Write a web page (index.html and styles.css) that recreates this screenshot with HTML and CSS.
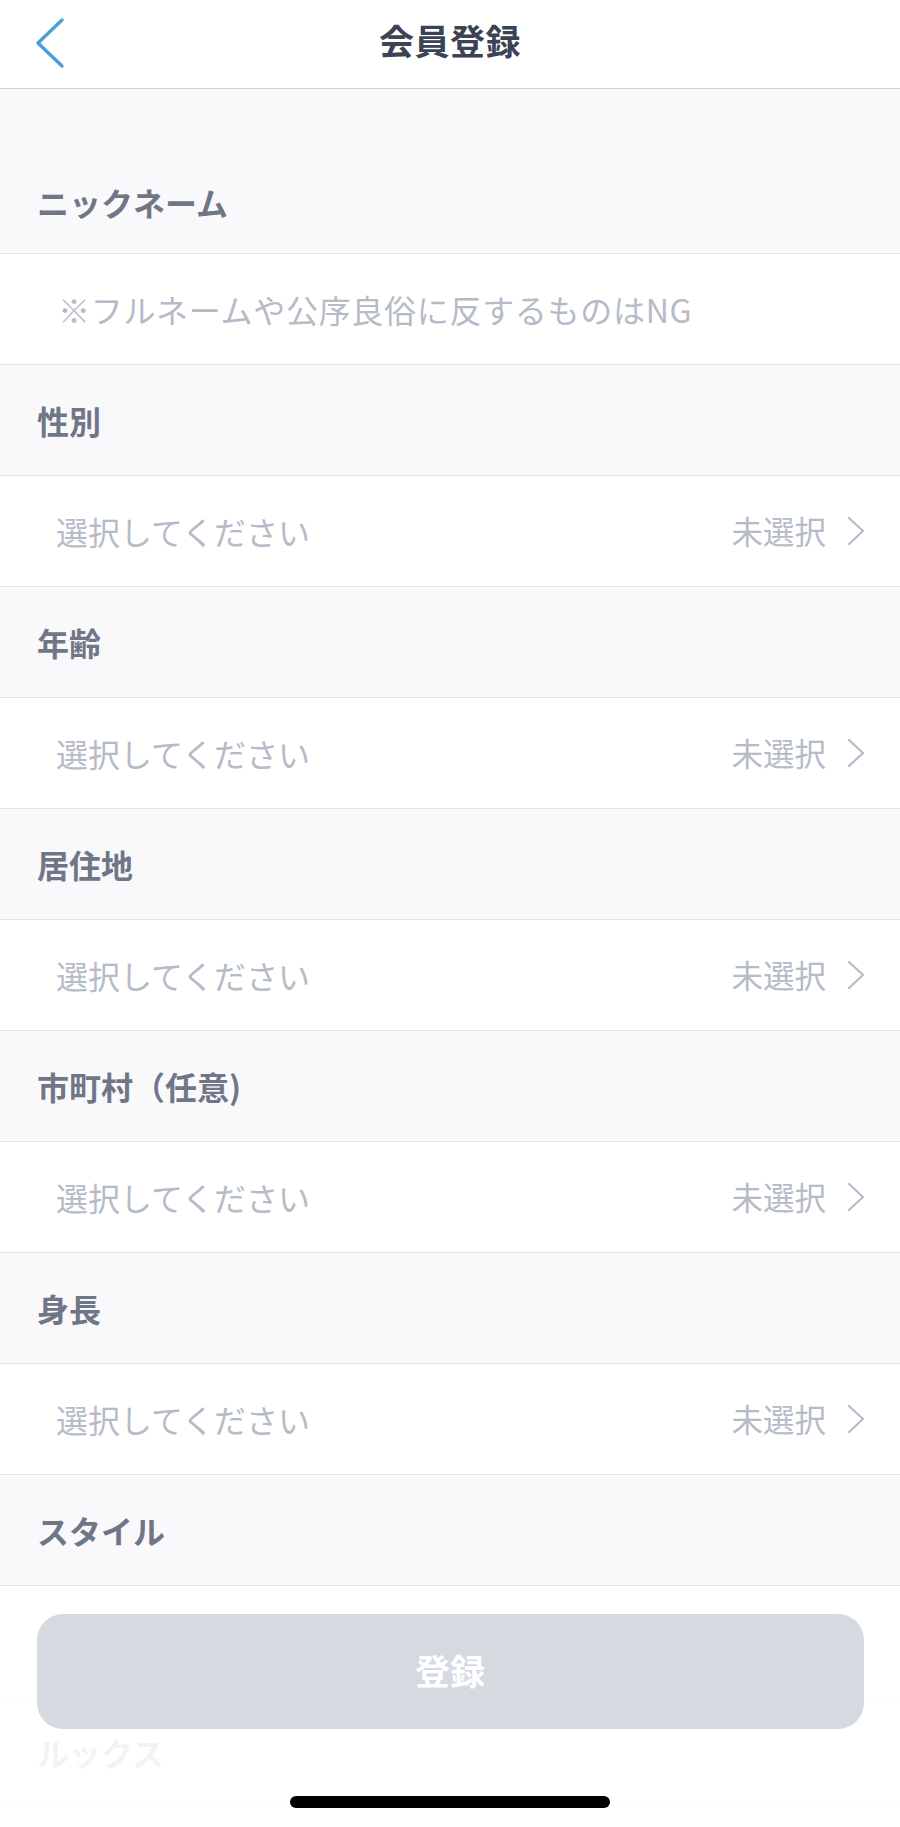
FILE: index.html
```html
<!DOCTYPE html>
<html lang="ja">
<head>
<meta charset="utf-8">
<title>会員登録</title>
<link rel="stylesheet" href="styles.css">
</head>
<body>
<div class="app">
  <header class="nav">
    <div class="nav-left">
      <svg class="back" width="30" height="52" viewBox="0 0 30 52" aria-hidden="true">
        <polyline points="27,3 3,26 27,49" fill="none" stroke="#4b9fd7" stroke-width="3.4" stroke-linecap="round" stroke-linejoin="round"/>
      </svg>
    </div>
    <h1 class="title">会員登録</h1>
    <div class="nav-right"></div>
  </header>

  <main class="form">
    <div class="label-row first"><span class="label">ニックネーム</span></div>
    <div class="input-row"><span class="placeholder hint">※フルネームや公序良俗に反するものはNG</span></div>

    <div class="label-row"><span class="label">性別</span></div>
    <div class="input-row select"><span class="placeholder">選択してください</span><span class="value">未選択</span><svg class="chev" width="20" height="32" viewBox="0 0 20 32" aria-hidden="true"><polyline points="3,3 17,16 3,29" fill="none" stroke="#b5bbc7" stroke-width="2.2" stroke-linecap="round" stroke-linejoin="round"/></svg></div>

    <div class="label-row"><span class="label">年齢</span></div>
    <div class="input-row select"><span class="placeholder">選択してください</span><span class="value">未選択</span><svg class="chev" width="20" height="32" viewBox="0 0 20 32" aria-hidden="true"><polyline points="3,3 17,16 3,29" fill="none" stroke="#b5bbc7" stroke-width="2.2" stroke-linecap="round" stroke-linejoin="round"/></svg></div>

    <div class="label-row"><span class="label">居住地</span></div>
    <div class="input-row select"><span class="placeholder">選択してください</span><span class="value">未選択</span><svg class="chev" width="20" height="32" viewBox="0 0 20 32" aria-hidden="true"><polyline points="3,3 17,16 3,29" fill="none" stroke="#b5bbc7" stroke-width="2.2" stroke-linecap="round" stroke-linejoin="round"/></svg></div>

    <div class="label-row"><span class="label">市町村（任意)</span></div>
    <div class="input-row select"><span class="placeholder">選択してください</span><span class="value">未選択</span><svg class="chev" width="20" height="32" viewBox="0 0 20 32" aria-hidden="true"><polyline points="3,3 17,16 3,29" fill="none" stroke="#b5bbc7" stroke-width="2.2" stroke-linecap="round" stroke-linejoin="round"/></svg></div>

    <div class="label-row"><span class="label">身長</span></div>
    <div class="input-row select"><span class="placeholder">選択してください</span><span class="value">未選択</span><svg class="chev" width="20" height="32" viewBox="0 0 20 32" aria-hidden="true"><polyline points="3,3 17,16 3,29" fill="none" stroke="#b5bbc7" stroke-width="2.2" stroke-linecap="round" stroke-linejoin="round"/></svg></div>

    <div class="label-row"><span class="label">スタイル</span></div>
    <div class="input-row select"></div>

    <div class="label-row"><span class="label">ルックス</span></div>
  </main>

  <div class="footer">
    <button class="submit" type="button">登録</button>
    <div class="home-indicator"></div>
  </div>
</div>
</body>
</html>
```

FILE: styles.css
```css
* {
  box-sizing: border-box;
}

html, body {
  margin: 0;
  padding: 0;
  background: #ffffff;
}

body {
  font-family: "Noto Sans CJK JP", "Noto Sans", sans-serif;
}

.app {
  position: relative;
  width: 900px;
  height: 1827px;
  overflow: hidden;
  background: #ffffff;
}

.nav {
  height: 89px;
  display: grid;
  grid-template-columns: 1fr auto 1fr;
  align-items: center;
  border-bottom: 1px solid #d3d3d7;
  background: #ffffff;
}

.nav-left {
  padding-left: 35px;
  display: flex;
  align-items: center;
  padding-bottom: 2px;
}

.back {
  display: block;
}

.title {
  margin: 0;
  font-size: 35px;
  font-weight: 700;
  color: #3b4355;
  line-height: 1;
  padding-bottom: 10px;
  letter-spacing: 0.5px;
}

.form {
  display: flex;
  flex-direction: column;
}

.label-row {
  height: 111px;
  display: flex;
  align-items: center;
  padding-left: 37px;
  background: #f9f9fb;
  border-bottom: 1px solid #e3e4e8;
}

.label-row.first {
  height: 165px;
  padding-top: 62px;
}

.label {
  font-size: 32px;
  font-weight: 700;
  color: #6f7787;
  line-height: 1;
}

.input-row {
  height: 111px;
  display: flex;
  align-items: center;
  padding-left: 56px;
  padding-right: 34px;
  background: #ffffff;
  border-bottom: 1px solid #e3e4e8;
}

.placeholder {
  font-size: 32px;
  color: #b5bbc7;
  line-height: 1;
}

.placeholder.hint {
  letter-spacing: 0.7px;
  padding-left: 2px;
}

.value {
  margin-left: auto;
  font-size: 31.5px;
  color: #b5bbc7;
  line-height: 1;
}

.chev {
  display: block;
  margin-left: 20px;
}

.footer {
  position: absolute;
  left: 0;
  right: 0;
  bottom: 0;
  height: 241px;
  background: rgba(255, 255, 255, 0.91);
  display: flex;
  flex-direction: column;
  align-items: center;
  padding-top: 28px;
}

.submit {
  width: 827px;
  height: 115px;
  border: none;
  border-radius: 26px;
  background: #d5d9e0;
  color: #ffffff;
  font-family: "Noto Sans CJK JP", "Noto Sans", sans-serif;
  font-size: 35px;
  font-weight: 700;
  padding: 0 0 4px;
}

.home-indicator {
  width: 320px;
  height: 12px;
  margin-top: 67px;
  border-radius: 6px;
  background: #000000;
}
```
